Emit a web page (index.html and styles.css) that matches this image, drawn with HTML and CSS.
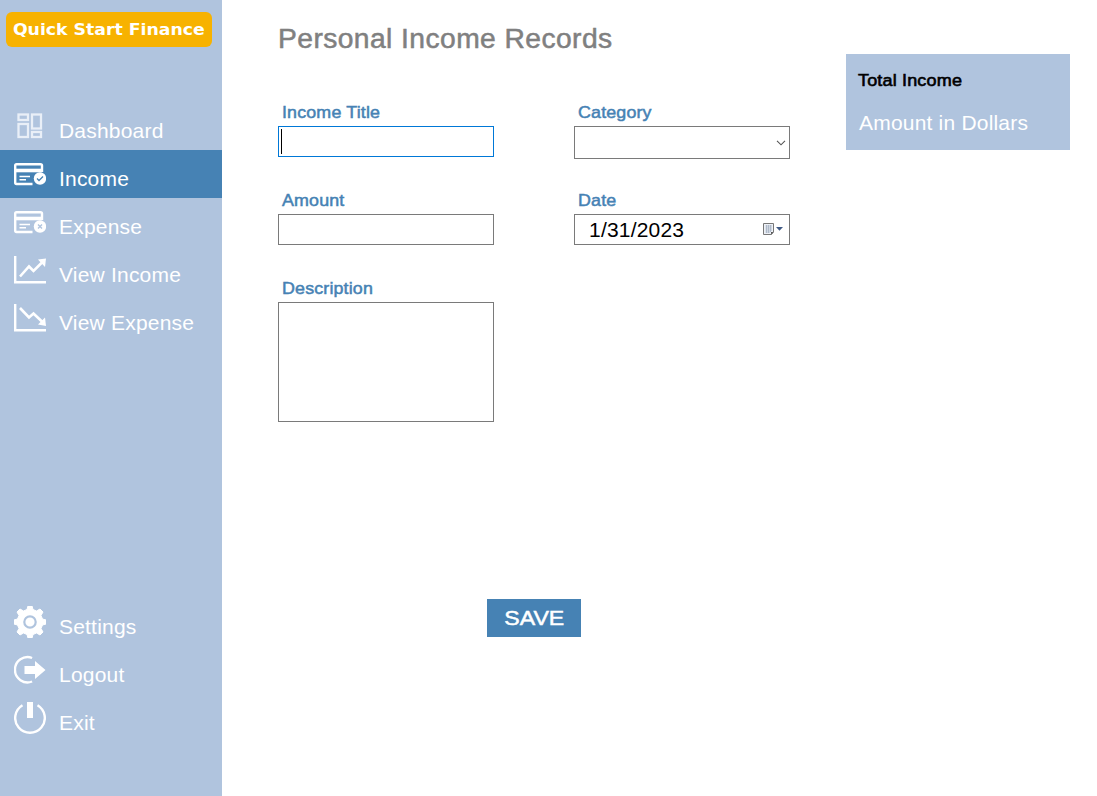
FILE: index.html
```html
<!DOCTYPE html>
<html lang="en">
<head>
<meta charset="utf-8">
<title>Quick Start Finance</title>
<link rel="stylesheet" href="styles.css">
</head>
<body>
<div class="app">
  <aside class="sidebar">
    <div class="logo"><span class="logo-text">Quick Start Finance</span></div>
    <nav class="menu">
      <a class="item"><svg class="icon" viewBox="0 0 32 32" fill="none" stroke="#e9eff7" stroke-width="2.300"><rect x="4.500" y="4.500" width="9.500" height="5.500"/><rect x="18" y="4.500" width="9" height="14"/><rect x="4.500" y="14" width="9.500" height="13"/><rect x="18" y="22" width="9" height="5"/></svg><span>Dashboard</span></a>
      <a class="item active"><svg class="icon" viewBox="0 0 32 32" fill="none" stroke="#fff"><path d="M28 14V7.500Q28 6.200 26.500 6.200H2.500Q1.200 6.200 1.200 7.500V24.500Q1.200 26 2.500 26H18.500" stroke-width="2.400"/><path d="M1 12.500H28" stroke-width="3.600"/><path d="M5.500 18.500H16M5.500 21.700H12" stroke-width="1.500"/><circle cx="26" cy="20.500" r="6.200" fill="#fff" stroke="none"/><path d="M23 20.500l2 2 4-4" stroke="#4682b4" stroke-width="1.300"/></svg><span>Income</span></a>
      <a class="item"><svg class="icon" viewBox="0 0 32 32" fill="none" stroke="#fff"><path d="M28 14V7.500Q28 6.200 26.500 6.200H2.500Q1.200 6.200 1.200 7.500V24.500Q1.200 26 2.500 26H18.500" stroke-width="2.400"/><path d="M1 12.500H28" stroke-width="3.600"/><path d="M5.500 18.500H16M5.500 21.700H12" stroke-width="1.500"/><circle cx="26" cy="20.500" r="6.200" fill="#fff" stroke="none"/><path d="M24 18.500l4 4M28 18.500l-4 4" stroke="#b0c4de" stroke-width="1.400"/></svg><span>Expense</span></a>
      <a class="item"><svg class="icon" viewBox="0 0 32 32" fill="none" stroke="#fff"><path d="M1.200 2V28.300H32" stroke-width="2.400"/><path d="M6 22.500L15 12.500L19.500 17L29 7.500" stroke-width="2.600"/><path d="M24 5.500L32 4.500L31 13Z" fill="#fff" stroke="none"/></svg><span>View Income</span></a>
      <a class="item"><svg class="icon" viewBox="0 0 32 32" fill="none" stroke="#fff"><path d="M1.200 2V28.300H32" stroke-width="2.400"/><path d="M6 6L15 15.500L19.500 11.500L29 20.500" stroke-width="2.600"/><path d="M24 22.500L32 24L31 15.500Z" fill="#fff" stroke="none"/></svg><span>View Expense</span></a>
    </nav>
    <nav class="menu menu-bottom">
      <a class="item"><svg class="icon" viewBox="0 0 32 32"><path d="M13 3.500L14 0H18L19 3.500L22.500 5L26 3L29 6L27 9.500L28.500 13L32 14V18L28.500 19L27 22.500L29 26L26 29L22.500 27L19 28.500L18 32H14L13 28.500L9.500 27L6 29L3 26L5 22.500L3.500 19L0 18V14L3.500 13L5 9.500L3 6L6 3L9.500 5Z" fill="#fff" stroke="#fff" stroke-width="1" stroke-linejoin="round"/><circle cx="16" cy="16" r="5.700" fill="none" stroke="#b0c4de" stroke-width="2.200"/></svg><span>Settings</span></a>
      <a class="item"><svg class="icon" viewBox="0 0 32 32"><path d="M18.500 4A12.600 12.600 0 1 0 18.500 27.500" fill="none" stroke="#fff" stroke-width="2.400" transform="translate(-.4 0)"/><path d="M10.500 12H21V7L31.500 16L21 25V20H10.500Z" fill="#fff"/></svg><span>Logout</span></a>
      <a class="item"><svg class="icon" viewBox="0 0 32 32"><path d="M8.500 3.200A14.800 14.800 0 1 0 23.500 3.200" fill="none" stroke="#fff" stroke-width="2.400"/><path d="M13 0H19V16H13Z" fill="#fff"/></svg><span>Exit</span></a>
    </nav>
  </aside>
  <main class="content">
    <h1 class="title">Personal Income Records</h1>
    <form class="form">
      <div class="field"><span class="label">Income Title</span><div class="box focused"><i class="caret"></i></div></div>
      <div class="field"><span class="label">Category</span><div class="box combo"><svg width="10" height="6" viewBox="0 0 10 6"><path d="M1 .8L5 4.800L9 .8" fill="none" stroke="#555" stroke-width="1.100"/></svg></div></div>
      <div class="field"><span class="label">Amount</span><div class="box"></div></div>
      <div class="field"><span class="label">Date</span><div class="box date"><span>1/31/2023</span><svg width="22" height="14" viewBox="0 0 22 14"><path d="M1.500 1.500H11.500V10L9.500 12.500H1.500Z" fill="#edf0f6" stroke="#777" /><path d="M3.500 4H10M3.500 6H10M3.500 8H10M3.500 10H8M4.500 3V11M6.500 3V11M8.500 3V10" stroke="#a5b1c3" stroke-width=".8"/><path d="M9 12.500V10H11.500Z" fill="#555"/><path d="M14 5H21L17.500 8.700Z" fill="#405a85"/></svg></div></div>
      <div class="field"><span class="label">Description</span><div class="box area"></div></div>
    </form>
    <button class="save" type="button"><span>SAVE</span></button>
  </main>
  <section class="total">
    <div class="total-label">Total Income</div>
    <div class="total-value">Amount in Dollars</div>
  </section>
</div>
</body>
</html>
```
FILE: styles.css
```css
* { box-sizing: border-box; }
body { margin: 0; background: #fff; font-family: "Liberation Sans", Arial, sans-serif; }
.app { display: flex; align-items: flex-start; width: 1097px; height: 796px; overflow: hidden; }
.sidebar { flex: none; display: flex; flex-direction: column; width: 222px; height: 796px; padding-bottom: 54px; background: #b0c4de; }
.logo { flex: none; display: flex; align-items: center; justify-content: center; width: 206px; height: 35px; margin: 12px 0 0 6px; border-radius: 6px; background: #f7b200; color: #fff; }
.logo-text { font: bold 16px/34px "DejaVu Sans", sans-serif; white-space: nowrap; transform: scaleX(1.08); }
.menu { margin-top: 55px; }
.menu-bottom { margin-top: auto; }
.item { display: flex; align-items: center; height: 48px; padding-left: 14px; color: #fff; font-size: 21px; line-height: 24px; letter-spacing: .2px; }
.item span { margin: 9px 0 0 13px; }
.active { background: #4682b4; }
.icon { display: block; width: 32px; height: 32px; }
.content { flex: none; width: 568px; margin-left: 56px; }
.title { width: max-content; margin: 23px 0 0; color: #808080; font-size: 27px; font-weight: 400; line-height: 32px; letter-spacing: .4px; white-space: nowrap; transform: scaleX(1.046); transform-origin: 0 0; -webkit-text-stroke: .5px #808080; }
.form { display: grid; grid-template-columns: 216px 216px; column-gap: 80px; grid-template-rows: 88px 88px 132px; margin-top: 47px; }
.field { min-width: 0; }
.label { display: block; width: max-content; height: 24px; padding: 1px 0 0 4px; color: #4682b4; font-size: 17px; line-height: 20px; letter-spacing: .15px; transform: scaleX(1.05); transform-origin: 4px 0; -webkit-text-stroke: .5px #4682b4; }
.box { display: flex; align-items: center; height: 31px; border: 1px solid #7a7a7a; background: #fff; color: #000; }
.focused { border-color: #0078d7; padding-left: 2px; }
.caret { width: 1px; height: 25px; background: #000; }
.combo { height: 33px; justify-content: flex-end; padding-right: 3px; }
.date { justify-content: space-between; padding: 0 5px 0 14px; font-size: 21px; letter-spacing: .2px; }
.date svg { margin-bottom: 1px; }
.area { height: 120px; }
.save { display: block; width: 94px; height: 38px; margin: 189px 0 0 209px; padding: 0; border: 0; background: #4682b4; color: #fff; font: 21px/38px "Liberation Sans", Arial, sans-serif; -webkit-text-stroke: .5px #fff; }
.save span { display: inline-block; transform: scaleX(1.1); }
.total { flex: none; width: 224px; height: 96px; margin-top: 54px; padding: 16px 13px 0 12px; background: #b0c4de; white-space: nowrap; }
.total-label { width: max-content; padding-top: 1px; color: #000; font-size: 17px; line-height: 20px; letter-spacing: .15px; transform: scaleX(1.06); transform-origin: 0 0; -webkit-text-stroke: .6px #000; }
.total-value { margin: 20px 0 0 1px; color: #fff; font-size: 21px; line-height: 24px; letter-spacing: .2px; }
```
